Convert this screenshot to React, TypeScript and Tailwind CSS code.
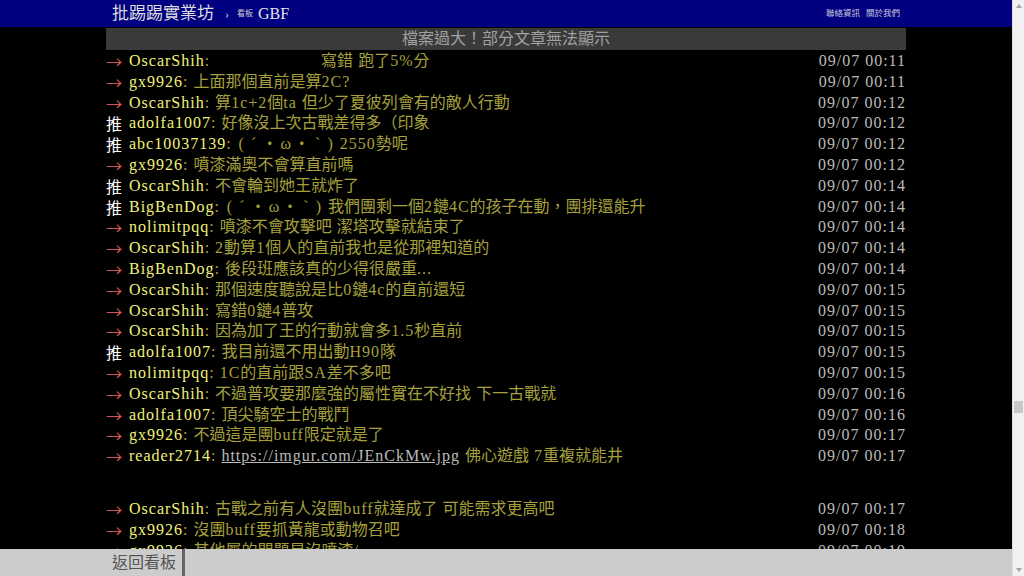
import React from "react";

function T({ s }: { s: string }) {
  const parts = s.match(/[\x00-\x7F]+|[^\x00-\x7F]+/g) || [];
  return (
    <>
      {parts.map((p, i) =>
        /^[\x00-\x7F]+$/.test(p) ? (
          <span key={i} className="tracking-[1px] whitespace-pre">
            {p}
          </span>
        ) : (
          <span key={i}>{p}</span>
        )
      )}
    </>
  );
}

function Kao() {
  return (
    <span className="inline-flex">
      <span className="inline-block w-[9px] text-center">(</span>
      <span className="inline-block w-[16px] text-center">´</span>
      <span className="inline-block w-[16px] text-center">・</span>
      <span className="inline-block w-[16px] text-center">ω</span>
      <span className="inline-block w-[16px] text-center">・</span>
      <span className="inline-block w-[16px] text-center">`</span>
      <span className="inline-block w-[9px] text-center">)</span>
    </span>
  );
}

type Push = { tag: "→" | "推"; user: string; content: React.ReactNode; time: string };

const rows: Push[] = [
  {
    tag: "→",
    user: "OscarShih",
    content: (
      <>
        <T s=": " />
        <span className="inline-block w-[106px]"></span>
        <T s="寫錯 跑了5%分" />
      </>
    ),
    time: "09/07 00:11",
  },
  { tag: "→", user: "gx9926", content: <T s=": 上面那個直前是算2C?" />, time: "09/07 00:11" },
  { tag: "→", user: "OscarShih", content: <T s=": 算1c+2個ta 但少了夏彼列會有的敵人行動" />, time: "09/07 00:12" },
  { tag: "推", user: "adolfa1007", content: <T s=": 好像沒上次古戰差得多（印象" />, time: "09/07 00:12" },
  {
    tag: "推",
    user: "abc10037139",
    content: (
      <>
        <T s=": " />
        <Kao />
        <T s=" 2550勢呢" />
      </>
    ),
    time: "09/07 00:12",
  },
  { tag: "→", user: "gx9926", content: <T s=": 噴漆滿奧不會算直前嗎" />, time: "09/07 00:12" },
  { tag: "推", user: "OscarShih", content: <T s=": 不會輪到她王就炸了" />, time: "09/07 00:14" },
  {
    tag: "推",
    user: "BigBenDog",
    content: (
      <>
        <T s=": " />
        <Kao />
        <T s=" 我們團剩一個2鏈4C的孩子在動，團排還能升" />
      </>
    ),
    time: "09/07 00:14",
  },
  { tag: "→", user: "nolimitpqq", content: <T s=": 噴漆不會攻擊吧 潔塔攻擊就結束了" />, time: "09/07 00:14" },
  { tag: "→", user: "OscarShih", content: <T s=": 2動算1個人的直前我也是從那裡知道的" />, time: "09/07 00:14" },
  { tag: "→", user: "BigBenDog", content: <T s=": 後段班應該真的少得很嚴重..." />, time: "09/07 00:14" },
  { tag: "→", user: "OscarShih", content: <T s=": 那個速度聽說是比0鏈4c的直前還短" />, time: "09/07 00:15" },
  { tag: "→", user: "OscarShih", content: <T s=": 寫錯0鏈4普攻" />, time: "09/07 00:15" },
  { tag: "→", user: "OscarShih", content: <T s=": 因為加了王的行動就會多1.5秒直前" />, time: "09/07 00:15" },
  { tag: "推", user: "adolfa1007", content: <T s=": 我目前還不用出動H90隊" />, time: "09/07 00:15" },
  { tag: "→", user: "nolimitpqq", content: <T s=": 1C的直前跟SA差不多吧" />, time: "09/07 00:15" },
  { tag: "→", user: "OscarShih", content: <T s=": 不過普攻要那麼強的屬性實在不好找 下一古戰就" />, time: "09/07 00:16" },
  { tag: "→", user: "adolfa1007", content: <T s=": 頂尖騎空士的戰鬥" />, time: "09/07 00:16" },
  { tag: "→", user: "gx9926", content: <T s=": 不過這是團buff限定就是了" />, time: "09/07 00:17" },
  {
    tag: "→",
    user: "reader2714",
    content: (
      <>
        <T s=": " />
        <span className="text-[#bbbbbb] underline">
          <T s="https://imgur.com/JEnCkMw.jpg" />
        </span>
        <T s=" 佛心遊戲 7重複就能井" />
      </>
    ),
    time: "09/07 00:17",
  },
];

const rows2: Push[] = [
  { tag: "→", user: "OscarShih", content: <T s=": 古戰之前有人沒團buff就達成了 可能需求更高吧" />, time: "09/07 00:17" },
  { tag: "→", user: "gx9926", content: <T s=": 沒團buff要抓黃龍或動物召吧" />, time: "09/07 00:18" },
  { tag: "→", user: "gx9926", content: <T s=": 其他屬的問題是沒噴漆/" />, time: "09/07 00:19" },
];

const FONT = "font-['Liberation_Serif','Noto_Sans_CJK_TC',serif]";

function Row({ p }: { p: Push }) {
  return (
    <div className="flex h-[20.8px] items-center whitespace-nowrap text-[16px] leading-[20.8px]">
      <div className="flex min-w-0 flex-1 items-center">
        <span
          className={`inline-block w-[23px] shrink-0 font-['Noto_Sans_CJK_TC',sans-serif] font-light leading-[20.8px] ${
            p.tag === "推" ? "text-white font-normal" : "text-[#ff6666]"
          }`}
        >
          {p.tag}
        </span>
        <span className="text-[#f2f27a]">
          <T s={p.user} />
        </span>
        <span className="text-[#a6a03c]">{p.content}</span>
      </div>
      <span className="shrink-0 text-[#bbbbbb]">
        <T s={p.time} />
      </span>
    </div>
  );
}

export default function App() {
  return (
    <div className={`flex h-[576px] w-[1024px] overflow-hidden bg-black ${FONT}`}>
      <div className="relative flex min-w-0 flex-1 flex-col">
        <div className="h-[27px] shrink-0 bg-[#000080]">
          <div className="mx-auto flex h-full w-[800px] items-center justify-between px-[6px]">
            <div className="flex items-center">
              <span className="text-[17px] leading-none text-[#dddddd]">批踢踢實業坊</span>
              <span className="ml-[11px] text-[12px] leading-none text-[#cccccc]">›</span>
              <span className="ml-[8px] text-[8px] leading-none text-[#cccccc]">看板</span>
              <span className="ml-[5px] text-[16px] leading-none text-[#e6e6e6]">GBF</span>
            </div>
            <div className="flex items-center gap-[6px] text-[8.5px] leading-none text-[#c8c8dc]">
              <span>聯絡資訊</span>
              <span>關於我們</span>
            </div>
          </div>
        </div>
        <div className="mx-auto mt-[1px] h-[22px] w-[800px] shrink-0 bg-[#3a3a3a] text-center text-[16px] leading-[22px] text-[#a0a0a0]">
          檔案過大！部分文章無法顯示
        </div>
        <div className="mx-auto mt-[1px] w-[800px]">
          {rows.map((p, i) => (
            <Row key={i} p={p} />
          ))}
          <div className="h-[32px]" />
          {rows2.map((p, i) => (
            <Row key={i} p={p} />
          ))}
        </div>
        <div className="absolute bottom-0 left-0 right-0 h-[27px] bg-[#cccccc]">
          <div className="mx-auto flex h-full w-[800px]">
            <div className="flex h-full items-center border-r-[3px] border-[#666666] px-[6px] text-[16px] text-[#555555]">
              返回看板
            </div>
          </div>
        </div>
      </div>
      <div className="flex w-[12px] shrink-0 flex-col items-center justify-between border-l border-[#e0e0e0] bg-[#f1f1f1] py-[4px]">
        <svg width="6" height="4" viewBox="0 0 6 4">
          <polygon points="3,0 6,4 0,4" fill="#a3a3a3" />
        </svg>
        <div className="mt-[393px] h-[12px] w-[9px] bg-[#c8c8c8]" />
        <div className="flex-1" />
        <svg width="6" height="4" viewBox="0 0 6 4">
          <polygon points="0,0 6,0 3,4" fill="#a3a3a3" />
        </svg>
      </div>
    </div>
  );
}
